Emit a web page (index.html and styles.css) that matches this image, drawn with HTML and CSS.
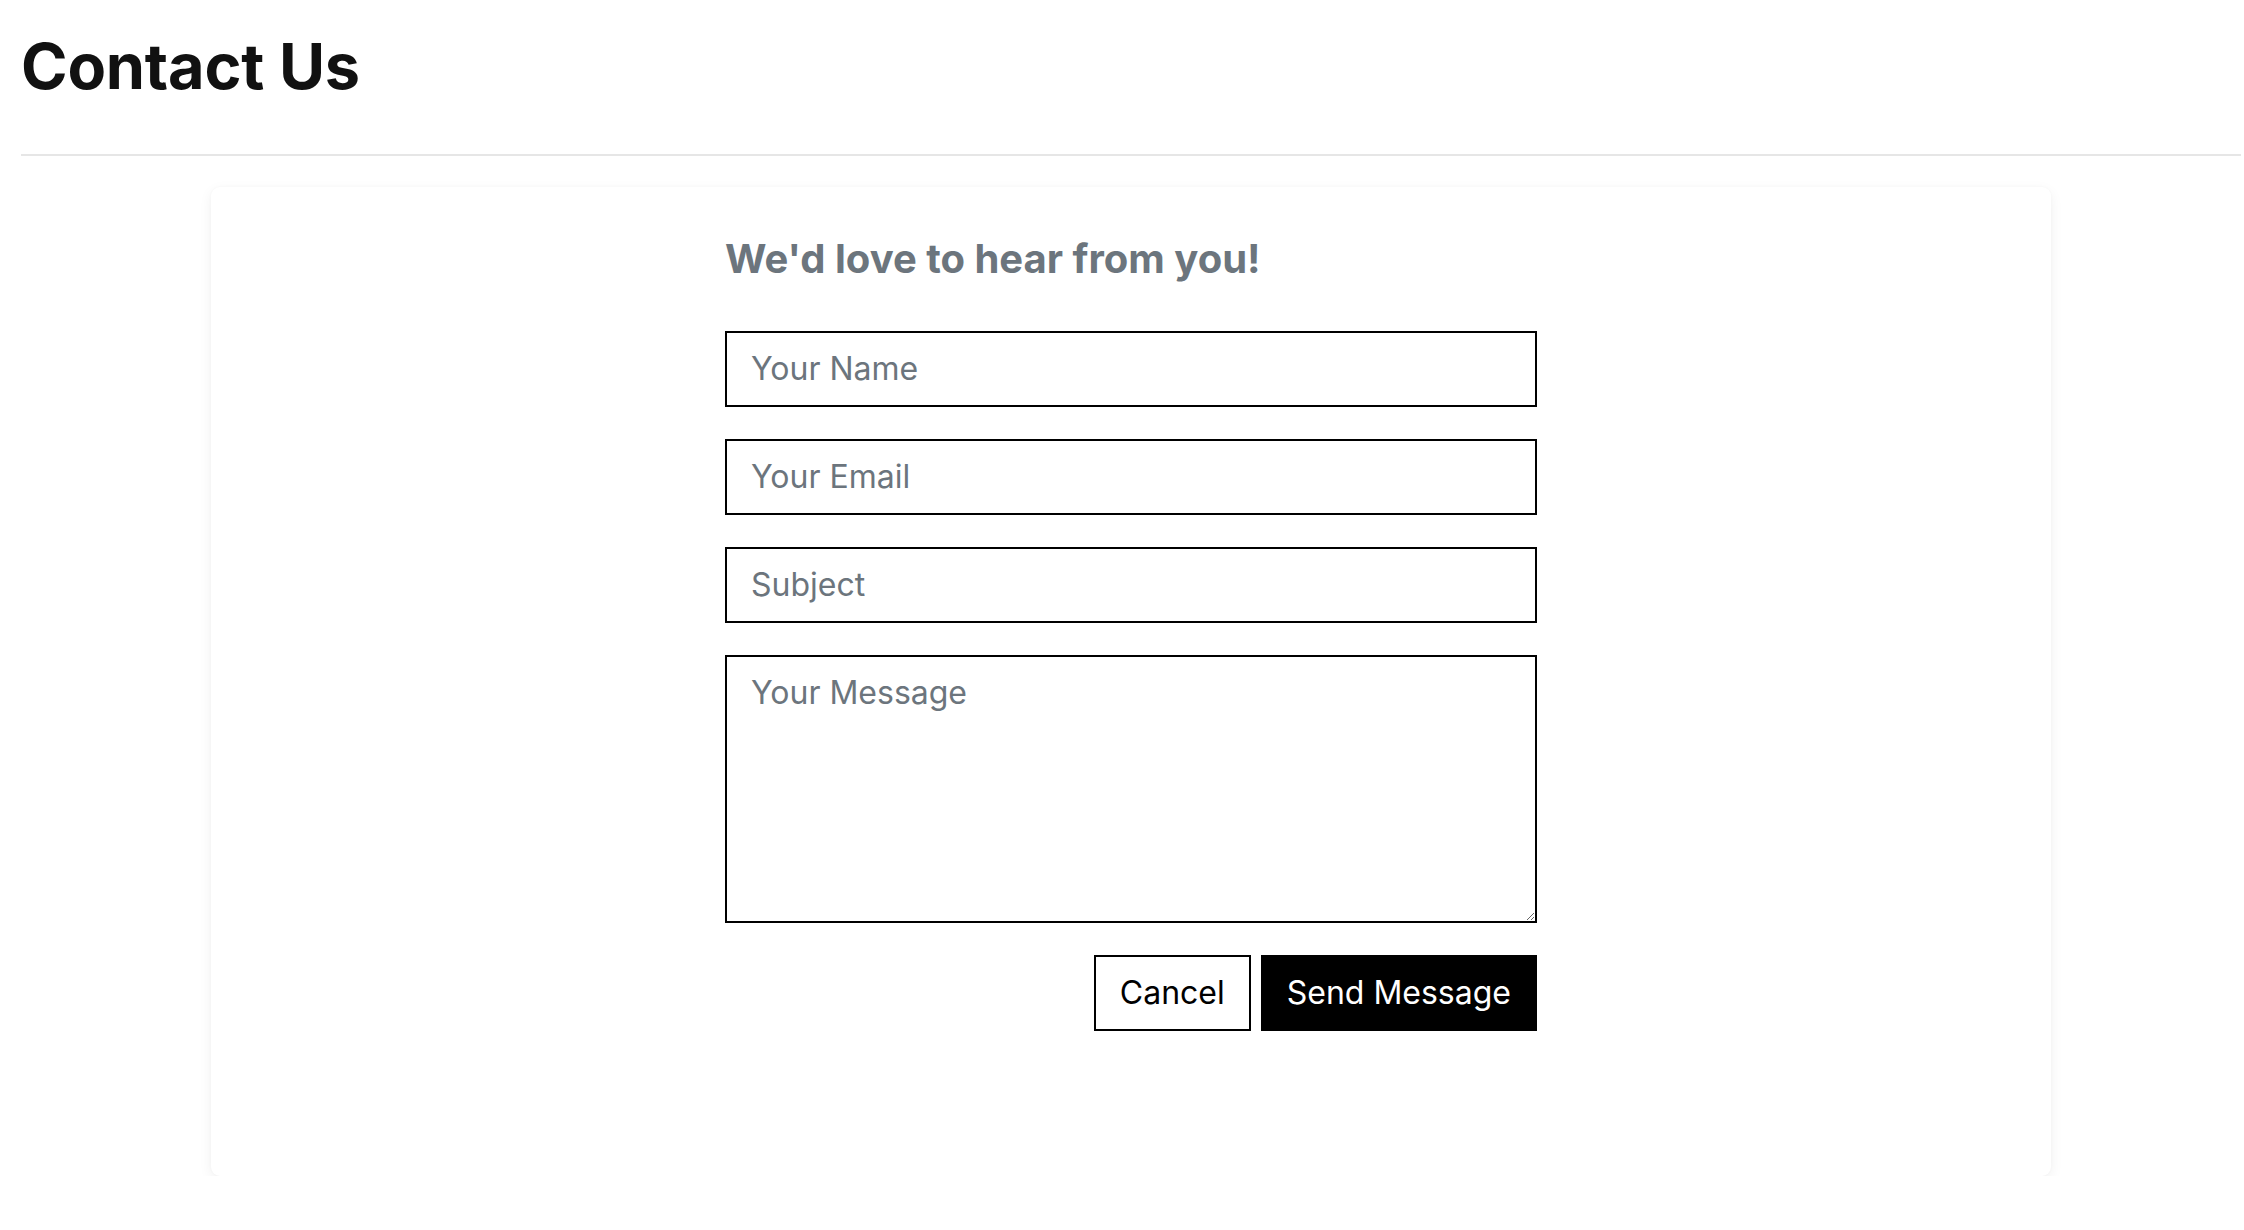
FILE: index.html
```html
<!DOCTYPE html>
<html lang="en">
<head>
<meta charset="utf-8">
<title>Contact Us</title>
<link rel="stylesheet" href="styles.css">
</head>
<body>
<main class="page">
  <header class="page-header">
    <h1 class="page-title">Contact Us</h1>
  </header>
  <section class="card">
    <form class="contact-form">
      <h2 class="form-heading">We'd love to hear from you!</h2>
      <input class="field" type="text" placeholder="Your Name">
      <input class="field" type="email" placeholder="Your Email">
      <input class="field" type="text" placeholder="Subject">
      <textarea class="field field-area" rows="5" placeholder="Your Message"></textarea>
      <div class="actions">
        <button type="button" class="btn btn-outline">Cancel</button>
        <button type="submit" class="btn btn-solid">Send Message</button>
      </div>
    </form>
  </section>
</main>
</body>
</html>
```

FILE: styles.css
```css
* {
  box-sizing: border-box;
}

html, body {
  margin: 0;
  padding: 0;
  background: #ffffff;
}

body {
  font-family: Inter, "Noto Sans", "Liberation Sans", sans-serif;
  color: #111111;
}

.page {
  margin-left: 21px;
  margin-right: 3px;
}

.page-header {
  border-bottom: 2px solid #e6e6e6;
  padding-top: 29px;
  padding-bottom: 49px;
}

.page-title {
  margin: 0;
  font-size: 63px;
  font-weight: 700;
  line-height: 1.2;
  color: #111111;
  letter-spacing: -0.2px;
}

.card {
  margin: 31px 190px 0;
  background: #ffffff;
  border-radius: 9px;
  box-shadow: 0 4px 14px rgba(0, 0, 0, 0.06), 0 0 3px rgba(0, 0, 0, 0.03);
  padding: 48px 0 145px;
  display: flex;
  justify-content: center;
}

.contact-form {
  width: 812px;
  display: flex;
  flex-direction: column;
  gap: 32px;
}

.form-heading {
  margin: 0 0 16px;
  font-size: 40px;
  line-height: 1.2;
  font-weight: 700;
  color: #6c757d;
}

.field {
  display: block;
  width: 100%;
  font-family: Inter, "Noto Sans", "Liberation Sans", sans-serif;
  font-size: 32px;
  line-height: 1.5;
  padding: 12px 24px;
  border: 2px solid #000000;
  border-radius: 0;
  background: #ffffff;
  color: #212529;
  outline: none;
}

.field::placeholder {
  color: #6c757d;
  opacity: 1;
}

.field-area {
  resize: vertical;
  height: 268px;
}

.actions {
  display: flex;
  justify-content: flex-end;
  gap: 10px;
}

.btn {
  font-family: Inter, "Noto Sans", "Liberation Sans", sans-serif;
  font-size: 32px;
  line-height: 1.5;
  padding: 12px 24px;
  border: 2px solid #000000;
  border-radius: 0;
  cursor: pointer;
}

.btn-outline {
  background: #ffffff;
  color: #000000;
}

.btn-solid {
  background: #000000;
  color: #ffffff;
}
```
